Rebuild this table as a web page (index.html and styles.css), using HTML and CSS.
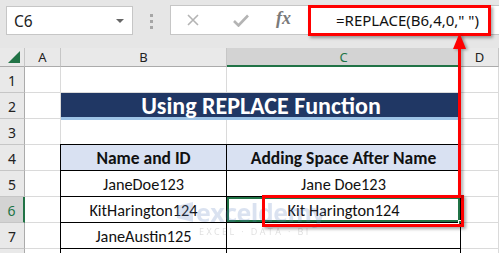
FILE: index.html
```html
<!DOCTYPE html>
<html>
<head>
<meta charset="utf-8">
<link rel="stylesheet" href="styles.css">
</head>
<body>
<div class="app">
  <div class="fbar">
    <div class="namebox"><span class="nb-text">C6</span><span class="nb-arrow"></span></div>
    <div class="dots"><i></i><i></i><i></i></div>
    <div class="fbox">
      <svg class="ico-x" width="12" height="12" viewBox="0 0 12 12"><path d="M1 1L11 11M11 1L1 11" stroke="#b4b4b4" stroke-width="1.6" fill="none"/></svg>
      <svg class="ico-ok" width="16" height="13" viewBox="0 0 16 13"><path d="M1 7L5.5 11.5L15 1.5" stroke="#b4b4b4" stroke-width="2.6" fill="none"/></svg>
      <span class="fx">fx</span>
      <span class="formula">=REPLACE(B6,4,0," ")</span>
    </div>
  </div>
  <div class="sheet">
    <div class="r r0">
      <div class="corner"><span class="tri"></span></div>
      <div class="ch">A</div>
      <div class="ch">B</div>
      <div class="ch ch-sel">C</div>
      <div class="ch">D</div>
    </div>
    <div class="r r1"><div class="rh">1</div><div class="c"></div><div class="c"></div><div class="c"></div><div class="c"></div></div>
    <div class="r r2"><div class="rh">2</div><div class="c"></div><div class="c"></div><div class="c"></div><div class="c"></div></div>
    <div class="r r3"><div class="rh">3</div><div class="c"></div><div class="c"></div><div class="c"></div><div class="c"></div></div>
    <div class="r r4"><div class="rh">4</div><div class="c"></div><div class="c"></div><div class="c"></div><div class="c"></div></div>
    <div class="r r5"><div class="rh">5</div><div class="c"></div><div class="c"></div><div class="c"></div><div class="c"></div></div>
    <div class="r r6"><div class="rh rh-sel">6</div><div class="c"></div><div class="c"></div><div class="c"></div><div class="c"></div></div>
    <div class="r r7"><div class="rh">7</div><div class="c"></div><div class="c"></div><div class="c"></div><div class="c"></div></div>
    <div class="r r8"><div class="rh">8</div><div class="c"></div><div class="c"></div><div class="c"></div><div class="c"></div></div>

    <div class="title">Using REPLACE Function</div>
    <div class="table">
      <div class="th">Name and ID</div>
      <div class="th">Adding Space After Name</div>
      <div class="td">JaneDoe123</div>
      <div class="td">Jane Doe123</div>
      <div class="td">KitHarington124</div>
      <div class="td td-sel">Kit Harington124<span class="handle"></span></div>
      <div class="td">JaneAustin125</div>
      <div class="td"></div>
      <div class="td"></div>
      <div class="td"></div>
    </div>
  </div>

  <div class="watermark">
    <div class="wm-main"><span class="wm-logo"></span>exceldemy</div>
    <div class="wm-sub">EXCEL · DATA · BI</div>
  </div>

  <div class="redbox rb-formula"></div>
  <div class="redbox rb-cell"></div>
  <svg class="arrow" width="20" height="170" viewBox="0 0 20 170">
    <rect x="8" y="14" width="3" height="151" fill="#ff0000"/>
    <polygon points="9.5,0 3,16 16,16" fill="#ff0000"/>
  </svg>
</div>
</body>
</html>
```
FILE: styles.css
```css
* { box-sizing: border-box; }
html, body { margin: 0; padding: 0; }
body {
  width: 499px;
  height: 253px;
  overflow: hidden;
  background: #ffffff;
  font-family: "Segoe UI", "Noto Sans", "Liberation Sans", sans-serif;
}
.app {
  position: relative;
  width: 499px;
  height: 253px;
  overflow: hidden;
  background: #e6e6e6;
}

/* formula bar */
.fbar {
  height: 48px;
  display: flex;
  align-items: flex-start;
  padding-top: 6px;
  padding-left: 6px;
}
.namebox {
  width: 127px;
  height: 29px;
  background: #fff;
  border: 1px solid #c6c6c6;
  display: flex;
  align-items: center;
  justify-content: space-between;
  padding: 0 8px 0 7px;
}
.nb-text { font-size: 15.5px; color: #222; }
.nb-arrow {
  width: 0; height: 0;
  border-left: 4px solid transparent;
  border-right: 4px solid transparent;
  border-top: 4px solid #666;
}
.dots {
  width: 37px;
  display: flex;
  flex-direction: column;
  align-items: center;
  gap: 3px;
  padding-top: 8px;
}
.dots i {
  display: block;
  width: 3px;
  height: 3px;
  background: #a6a6a6;
}
.fbox {
  flex: 1;
  height: 30px;
  margin-top: -1px;
  background: #fff;
  border: 1px solid #c6c6c6;
  border-right: none;
  display: flex;
  align-items: center;
  padding-left: 16px;
}
.ico-x { margin-right: 34px; }
.ico-ok { margin-right: 27px; }
.fx {
  font-family: "Liberation Serif", serif;
  font-style: italic;
  font-weight: bold;
  font-size: 18px;
  color: #7a7a7a;
  margin-right: 45px;
  margin-top: -3px;
}
.formula {
  font-size: 15px;
  color: #111;
}

/* sheet */
.sheet {
  display: grid;
  grid-template-columns: 25px 36px 166px 234px 38px;
  grid-template-rows: 19px repeat(8, 26px);
  background: #fff;
  font-family: "Carlito", "Lato", "Liberation Sans", sans-serif;
}
.r { display: contents; }
.r > :nth-child(1) { grid-column: 1; }
.r > :nth-child(2) { grid-column: 2; }
.r > :nth-child(3) { grid-column: 3; }
.r > :nth-child(4) { grid-column: 4; }
.r > :nth-child(5) { grid-column: 5; }
.r0 > * { grid-row: 1; }
.r1 > * { grid-row: 2; }
.r2 > * { grid-row: 3; }
.r3 > * { grid-row: 4; }
.r4 > * { grid-row: 5; }
.r5 > * { grid-row: 6; }
.r6 > * { grid-row: 7; }
.r7 > * { grid-row: 8; }
.r8 > * { grid-row: 9; }

.corner {
  background: #e9e9e9;
  border-right: 1px solid #c6c6c6;
  border-bottom: 1px solid #ababab;
  position: relative;
}
.tri {
  position: absolute;
  right: 4px;
  bottom: 3px;
  width: 0; height: 0;
  border-left: 12px solid transparent;
  border-bottom: 12px solid #217346;
}
.ch {
  background: #e9e9e9;
  border-right: 1px solid #c6c6c6;
  border-bottom: 1px solid #ababab;
  font-family: "Segoe UI", "Noto Sans", sans-serif;
  font-size: 13px;
  color: #222;
  display: flex;
  align-items: center;
  justify-content: center;
}
.ch-sel {
  background: #d3d3d3;
  color: #217346;
  border-bottom: 2px solid #217346;
}
.rh {
  background: #e9e9e9;
  border-right: 1px solid #ababab;
  border-bottom: 1px solid #c6c6c6;
  font-family: "Segoe UI", "Noto Sans", sans-serif;
  font-size: 14px;
  color: #222;
  display: flex;
  align-items: center;
  justify-content: center;
  padding-top: 2px;
}
.rh-sel {
  background: #d3d3d3;
  color: #217346;
  border-right: 2px solid #217346;
}
.c {
  border-right: 1px solid #dadada;
  border-bottom: 1px solid #dadada;
}

.title {
  grid-column: 3 / 5;
  grid-row: 3;
  background: #203764;
  border-bottom: 3px solid #9dc3e6;
  height: 27px;
  color: #fff;
  font-weight: bold;
  font-size: 24px;
  display: flex;
  align-items: center;
  justify-content: center;
  padding-top: 1px;
}
.table {
  grid-column: 3 / 5;
  grid-row: 5 / 10;
  display: grid;
  grid-template-columns: 166px 234px;
  grid-template-rows: repeat(5, 26px);
  margin-left: -1px;
  margin-top: -1px;
  border-top: 1px solid #000;
  border-left: 1px solid #000;
}
.th, .td {
  border-right: 1px solid #000;
  border-bottom: 1px solid #000;
  display: flex;
  align-items: center;
  justify-content: center;
  font-size: 16.3px;
  color: #111;
  position: relative;
}
.th {
  background: #d9e1f2;
  font-weight: bold;
  font-size: 17.5px;
}
.td-sel {
  box-shadow: inset 0 0 0 2px #217346;
}
.handle {
  position: absolute;
  right: -3px;
  bottom: -3px;
  width: 5px;
  height: 5px;
  background: #217346;
  border: 1px solid #fff;
}

/* watermark */
.watermark {
  position: absolute;
  left: 177px;
  top: 200px;
  opacity: 0.22;
  color: #5b7fc0;
  font-family: "Open Sans", sans-serif;
  pointer-events: none;
}
.wm-main {
  font-size: 25px;
  font-weight: bold;
  line-height: 24px;
  display: flex;
  align-items: center;
  letter-spacing: -0.5px;
}
.wm-logo {
  width: 16px;
  height: 20px;
  background: #5b7fc0;
  margin-right: 3px;
  clip-path: polygon(0 20%, 100% 0, 100% 100%, 0 80%);
}
.wm-sub {
  font-size: 9px;
  letter-spacing: 2.4px;
  color: #6d6d6d;
  margin-left: 22px;
  margin-top: 1px;
}

/* red annotations */
.redbox {
  position: absolute;
  border: 3px solid #ff0000;
  box-shadow: 2px 2px 3px rgba(0,0,0,0.35);
}
.rb-formula {
  left: 308px;
  top: 5px;
  width: 183px;
  height: 31px;
}
.rb-cell {
  left: 262px;
  top: 195px;
  width: 202px;
  height: 32px;
}
.arrow {
  position: absolute;
  left: 450px;
  top: 33px;
  filter: drop-shadow(2px 1px 1.5px rgba(0,0,0,0.35));
}
```
